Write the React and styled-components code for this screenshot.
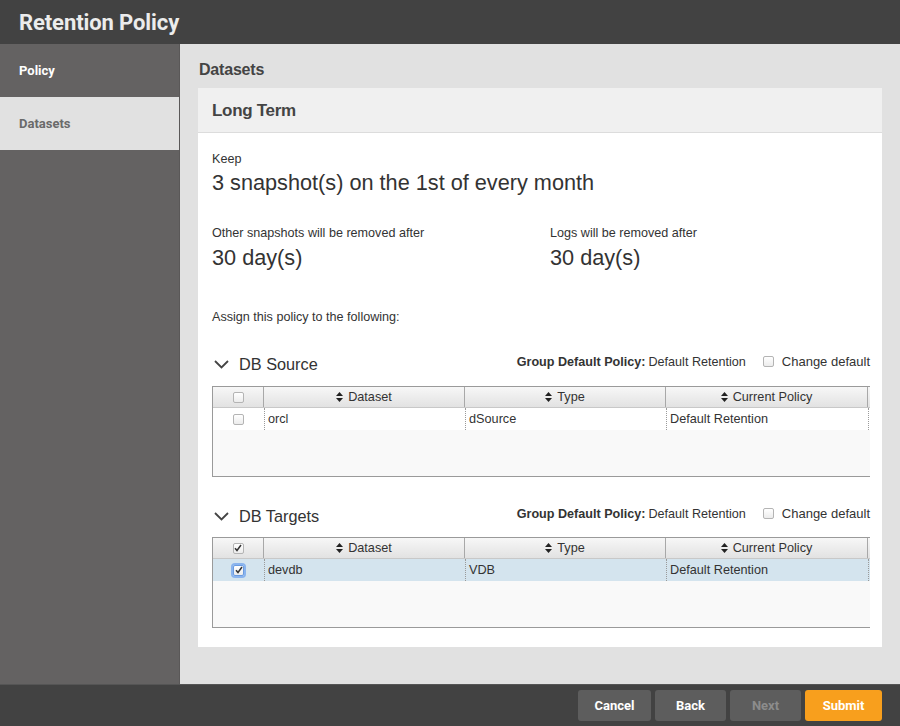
import React from "react";
import styled, { createGlobalStyle } from "styled-components";

const Global = createGlobalStyle`
  html, body { margin: 0; padding: 0; }
  body { font-family: "Liberation Sans", Arial, sans-serif; color: #333; }
  * { box-sizing: border-box; }
`;

const Frame = styled.div`
  width: 900px;
  height: 726px;
  display: flex;
  flex-direction: column;
  overflow: hidden;
`;

const TitleBar = styled.div`
  height: 44px;
  background: #424242;
  display: flex;
  align-items: center;
  padding-left: 19px;
  font-family: Roboto, sans-serif;
  font-weight: 700;
  font-size: 22px;
  color: #ececec;
  letter-spacing: -0.1px;
`;

const Middle = styled.div`
  flex: 1;
  display: flex;
  min-height: 0;
`;

const Sidebar = styled.div`
  width: 180px;
  background: #646262;
  border-right: 1px solid #5a5858;
  display: flex;
  flex-direction: column;
`;

const NavItem = styled.div`
  height: 53px;
  display: flex;
  align-items: center;
  padding-left: 19px;
  font-family: Roboto, sans-serif;
  font-weight: 700;
  font-size: 13px;
  background: ${(p) => (p.$active ? "#646262" : "#e1e1e1")};
  color: ${(p) => (p.$active ? "#ffffff" : "#6a6a6a")};
`;

const Main = styled.div`
  flex: 1;
  background: #e1e1e1;
  padding: 0 18px 0 18px;
  display: flex;
  flex-direction: column;
`;

const PageHeading = styled.div`
  height: 44px;
  display: flex;
  align-items: center;
  padding-left: 1px;
  padding-top: 8px;
  font-weight: 700;
  font-size: 16px;
  color: #444;
  letter-spacing: -0.2px;
`;

const Card = styled.div`
  background: #fff;
  display: flex;
  flex-direction: column;
`;

const CardHeader = styled.div`
  height: 45px;
  background: #f0f0f0;
  border-bottom: 1px solid #dcdcdc;
  display: flex;
  align-items: center;
  padding-left: 14px;
  padding-top: 2px;
  font-weight: 700;
  font-size: 17px;
  color: #444;
  letter-spacing: -0.3px;
`;

const CardBody = styled.div`
  padding: 18px 12px 19px 14px;
  display: flex;
  flex-direction: column;
`;

const Label = styled.div`
  font-size: 12.6px;
  line-height: 16px;
  color: #333;
  margin-top: ${(p) => p.$mt || 0}px;
`;

const BigValue = styled.div`
  font-size: 21.7px;
  line-height: 26px;
  color: #333;
  margin-top: ${(p) => p.$mt || 0}px;
`;

const TwoCol = styled.div`
  display: grid;
  grid-template-columns: 338px 1fr;
  margin-top: 29px;
`;

const Col = styled.div`
  display: flex;
  flex-direction: column;
`;

const GroupHeader = styled.div`
  height: 24px;
  display: flex;
  align-items: center;
  justify-content: space-between;
  margin-top: ${(p) => p.$mt}px;
`;

const GroupTitle = styled.div`
  display: flex;
  align-items: center;
  gap: 10px;
  padding-left: 2px;
  padding-top: 2px;
  font-size: 16.3px;
  color: #333;
`;

const GroupMeta = styled.div`
  display: flex;
  align-items: center;
  padding-bottom: 3px;
  font-size: 12.6px;
  color: #333;
  b { font-weight: 700; margin-right: 3px; }
`;

const MetaCheck = styled.label`
  display: flex;
  align-items: center;
  gap: 8px;
  margin-left: 17px;
  font-size: 13px;
`;

const Box = styled.span`
  width: 11px;
  height: 11px;
  border: 1px solid ${(p) => (p.$focus ? "#6a9be0" : "#b4b4b4")};
  border-radius: 2px;
  background: linear-gradient(#ffffff, #ececec);
  display: inline-flex;
  align-items: center;
  justify-content: center;
  box-shadow: ${(p) => (p.$focus ? "0 0 0 2px #8ab4ee" : "none")};
  flex: none;
`;

const TableWrap = styled.div`
  margin-top: ${(p) => p.$mt}px;
  width: 658px;
  height: 91px;
  border-left: 1px solid #9a9a9a;
  border-top: 1px solid #9a9a9a;
  border-bottom: 1px solid #9a9a9a;
  background: #f9f9f9;
  overflow: hidden;
`;

const Table = styled.div`
  width: 680px;
  display: flex;
  flex-direction: column;
`;

const Row = styled.div`
  display: grid;
  grid-template-columns: 51px 201px 201px 202px 25px;
  height: ${(p) => (p.$head ? 21 : 22)}px;
  background: ${(p) =>
    p.$head ? "linear-gradient(#f7f7f7, #e2e2e2)" : p.$selected ? "#d4e4ee" : "#ffffff"};
  border-bottom: ${(p) => (p.$head ? "1px solid #c8c8c8" : "none")};
`;

const HeadCell = styled.div`
  display: flex;
  align-items: center;
  justify-content: center;
  gap: 5px;
  font-size: 12.7px;
  color: #333;
  border-right: 1px solid #a8a8a8;
`;

const Cell = styled.div`
  display: flex;
  align-items: center;
  justify-content: ${(p) => (p.$center ? "center" : "flex-start")};
  padding-left: ${(p) => (p.$center ? 0 : 3)}px;
  font-size: 12.7px;
  color: #333;
  border-left: ${(p) => (p.$center ? "none" : "1px dotted #9a9a9a")};
`;

const Footer = styled.div`
  height: 42px;
  background: #424242;
  border-top: 1px solid #555;
  display: flex;
  align-items: center;
  justify-content: flex-end;
  gap: 4px;
  padding-right: 18px;
`;

const Button = styled.button`
  height: 31px;
  width: ${(p) => p.$w}px;
  border: none;
  border-radius: 3px;
  font-family: Roboto, sans-serif;
  font-weight: 700;
  font-size: 13px;
  background: ${(p) => (p.$primary ? "#f89f1d" : "#5d5d5d")};
  color: ${(p) => (p.$disabled ? "#8c8c8c" : "#ffffff")};
  padding: 0;
`;

const Chevron = () => (
  <svg width="15" height="9" viewBox="0 0 15 9">
    <polyline points="1,1 7.5,7.5 14,1" fill="none" stroke="#444" strokeWidth="1.8" />
  </svg>
);

const SortIcon = () => (
  <svg width="7" height="10" viewBox="0 0 7 10">
    <polygon points="0,4 3.5,0 7,4" fill="#222" />
    <polygon points="0,6 3.5,10 7,6" fill="#222" />
  </svg>
);

const Tick = () => (
  <svg width="8" height="8" viewBox="0 0 8 8">
    <polyline points="1,4.2 3,6.5 7,1" fill="none" stroke="#333" strokeWidth="1.5" />
  </svg>
);

const Check = ({ checked, focus }) => <Box $focus={focus}>{checked && <Tick />}</Box>;

const DataTable = ({ mt, rows, headChecked }) => (
  <TableWrap $mt={mt}>
    <Table>
      <Row $head>
        <HeadCell>
          <Check checked={headChecked} />
        </HeadCell>
        <HeadCell>
          <SortIcon /> Dataset
        </HeadCell>
        <HeadCell>
          <SortIcon /> Type
        </HeadCell>
        <HeadCell>
          <SortIcon /> Current Policy
        </HeadCell>
        <HeadCell />
      </Row>
      {rows.map((r) => (
        <Row key={r.name} $selected={r.selected}>
          <Cell $center>
            <Check checked={r.selected} focus={r.selected} />
          </Cell>
          <Cell>{r.name}</Cell>
          <Cell>{r.type}</Cell>
          <Cell>{r.policy}</Cell>
          <Cell />
        </Row>
      ))}
    </Table>
  </TableWrap>
);

const Group = ({ title, mt, tableMt, rows, headChecked }) => (
  <>
    <GroupHeader $mt={mt}>
      <GroupTitle>
        <Chevron />
        {title}
      </GroupTitle>
      <GroupMeta>
        <b>Group Default Policy:</b> Default Retention
        <MetaCheck>
          <Check />
          <span>Change default</span>
        </MetaCheck>
      </GroupMeta>
    </GroupHeader>
    <DataTable mt={tableMt} rows={rows} headChecked={headChecked} />
  </>
);

export default function App() {
  return (
    <Frame>
      <Global />
      <TitleBar>Retention Policy</TitleBar>
      <Middle>
        <Sidebar>
          <NavItem $active>Policy</NavItem>
          <NavItem>Datasets</NavItem>
        </Sidebar>
        <Main>
          <PageHeading>Datasets</PageHeading>
          <Card>
            <CardHeader>Long Term</CardHeader>
            <CardBody>
              <Label>Keep</Label>
              <BigValue $mt={3}>3 snapshot(s) on the 1st of every month</BigValue>
              <TwoCol>
                <Col>
                  <Label>Other snapshots will be removed after</Label>
                  <BigValue $mt={4}>30 day(s)</BigValue>
                </Col>
                <Col>
                  <Label>Logs will be removed after</Label>
                  <BigValue $mt={4}>30 day(s)</BigValue>
                </Col>
              </TwoCol>
              <Label $mt={38}>Assign this policy to the following:</Label>
              <Group
                title="DB Source"
                mt={26}
                tableMt={11}
                rows={[{ name: "orcl", type: "dSource", policy: "Default Retention" }]}
              />
              <Group
                title="DB Targets"
                mt={26}
                tableMt={10}
                headChecked
                rows={[{ name: "devdb", type: "VDB", policy: "Default Retention", selected: true }]}
              />
            </CardBody>
          </Card>
        </Main>
      </Middle>
      <Footer>
        <Button $w={73}>Cancel</Button>
        <Button $w={71}>Back</Button>
        <Button $w={71} $disabled>
          Next
        </Button>
        <Button $w={77} $primary>
          Submit
        </Button>
      </Footer>
    </Frame>
  );
}
